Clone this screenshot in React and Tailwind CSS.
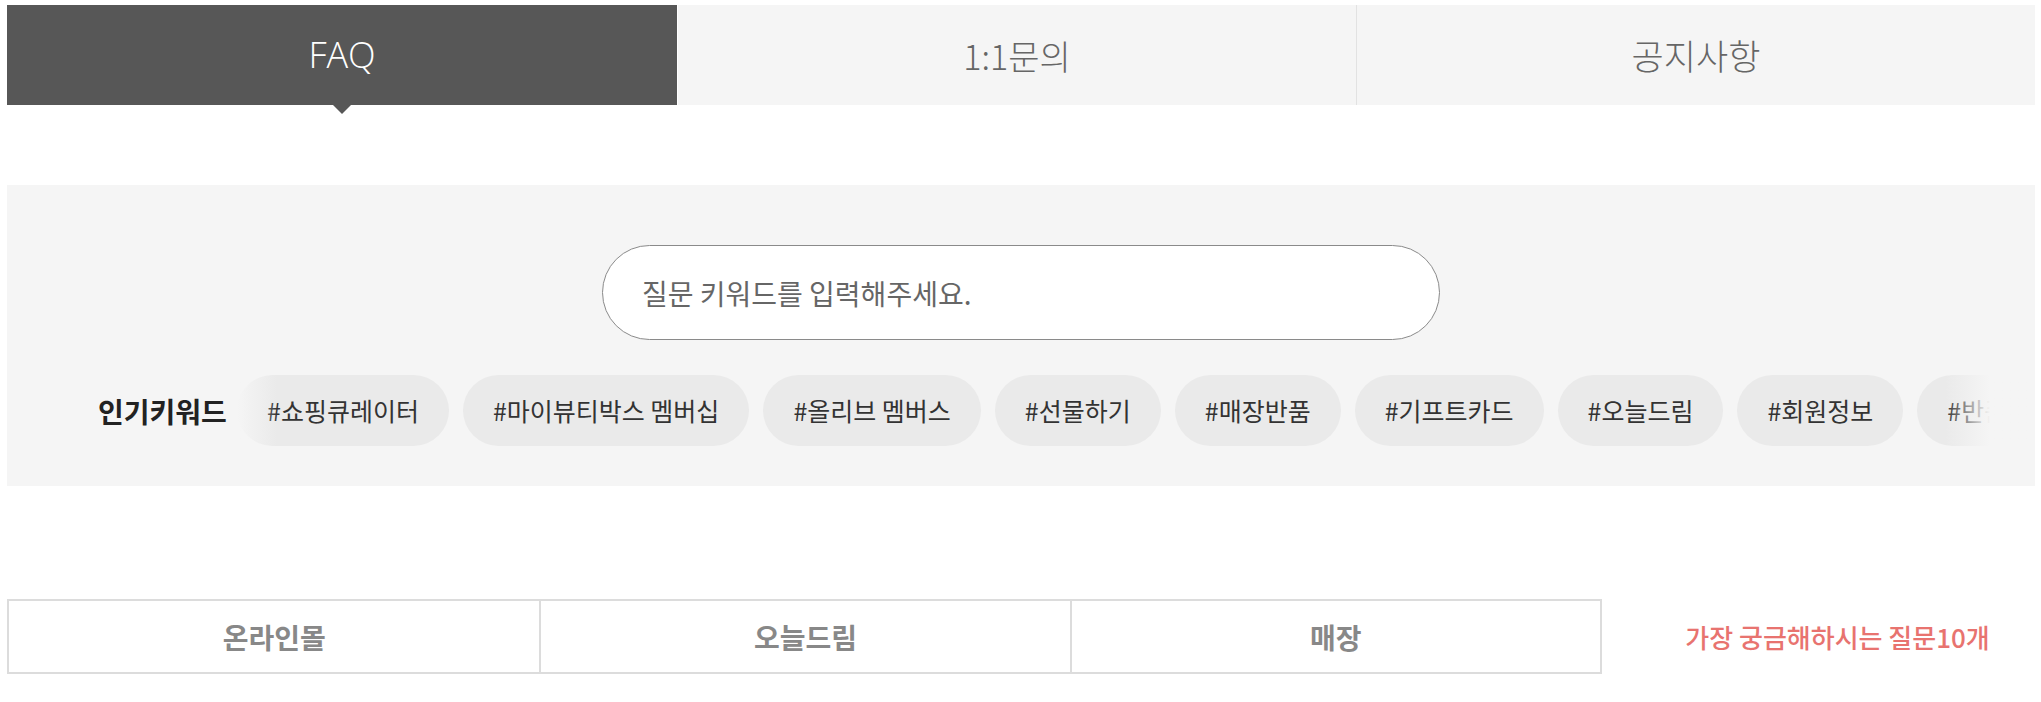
const tabs = ["FAQ", "1:1문의", "공지사항"];

const keywords = [
    "#쇼핑큐레이터",
    "#마이뷰티박스 멤버십",
    "#올리브 멤버스",
    "#선물하기",
    "#매장반품",
    "#기프트카드",
    "#오늘드림",
    "#회원정보",
    "#반품",
    "#배송",
];

const categories = ["온라인몰", "오늘드림", "매장"];

export default function App() {
    return (
        <div
            className="w-full min-h-screen bg-white pl-[7px] pr-[6px] pt-[5px] pb-[28px]"
            style={{ fontFamily: '"Noto Sans CJK KR", "Noto Sans", sans-serif' }}
        >
            {/* top tabs */}
            <div className="flex h-[100px]">
                <div className="relative w-[670px] shrink-0 flex items-center justify-center bg-[#575757] text-white text-[36px] font-light font-['Open_Sans',sans-serif]">
                    FAQ
                    <span className="absolute left-1/2 top-full -translate-x-1/2 w-0 h-0 border-x-[9px] border-x-transparent border-t-[9px] border-t-[#575757]" />
                </div>
                <div className="flex-1 ml-px flex items-center justify-center bg-[#f5f5f5] text-[#666] text-[34px] font-light">
                    {tabs[1]}
                </div>
                <div className="flex-1 flex items-center justify-center bg-[#f5f5f5] border-l border-[#e2e2e2] text-[#666] text-[35px] font-light">
                    {tabs[2]}
                </div>
            </div>

            {/* search area */}
            <div className="mt-[80px] bg-[#f5f5f5] h-[301px] pt-[60px]">
                <div className="flex justify-center">
                    <div className="w-[838px] h-[95px] rounded-full border border-[#8a8a8a] bg-white flex items-center pl-[39px] pr-[30px]">
                        <input
                            className="w-full bg-transparent outline-none text-[28px] text-[#333] placeholder:text-[#666]"
                            placeholder="질문 키워드를 입력해주세요."
                        />
                    </div>
                </div>

                <div className="flex items-center mt-[35px] h-[71px]">
                    <div className="w-[230px] shrink-0 pl-[91px] text-[28px] font-bold text-[#222]">
                        인기키워드
                    </div>
                    <div className="relative flex-1 h-full overflow-hidden">
                        <div className="flex gap-[14px] h-full">
                            {keywords.map((k) => (
                                <span
                                    key={k}
                                    className="shrink-0 h-full flex items-center px-[30px] rounded-full bg-[#eaeaea] text-[25px] text-[#333] whitespace-nowrap"
                                >
                                    {k}
                                </span>
                            ))}
                        </div>
                        <div className="absolute left-0 top-0 h-full w-[40px] bg-gradient-to-r from-[#f5f5f5] to-transparent" />
                        <div className="absolute right-0 top-0 h-full w-[90px] bg-gradient-to-l from-[#f5f5f5] via-[#f5f5f5] to-transparent" />
                    </div>
                </div>
            </div>

            {/* category tabs */}
            <div className="flex mt-[113px] h-[75px]">
                <div className="w-[1595px] grid grid-cols-3 border-2 border-[#dcdcdc]">
                    {categories.map((c, i) => (
                        <div
                            key={c}
                            className={`flex items-center justify-center text-[28px] font-bold text-[#888] ${
                                i > 0 ? "border-l-2 border-[#dcdcdc]" : ""
                            }`}
                        >
                            {c}
                        </div>
                    ))}
                </div>
                <div className="flex-1 flex items-center justify-center pl-[38px] text-[26px] font-medium text-[#e8736f]">
                    가장 궁금해하시는 질문10개
                </div>
            </div>
        </div>
    );
}
